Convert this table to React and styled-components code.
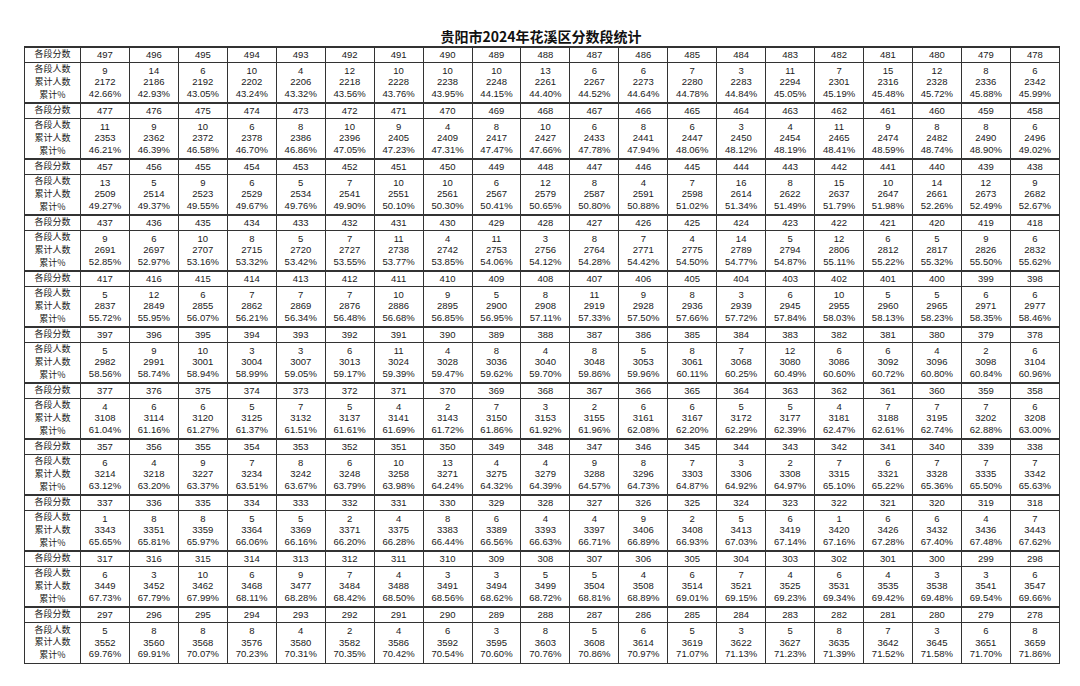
import React from "react";
import styled, { createGlobalStyle } from "styled-components";

const GlobalStyle = createGlobalStyle`
  html, body {
    margin: 0;
    padding: 0;
    background: #ffffff;
  }
  body {
    font-family: "Liberation Sans", Arial, "Noto Sans CJK SC", sans-serif;
    color: #111;
  }
`;

const Page = styled.div`
  width: 1080px;
  height: 686px;
  padding-top: 28px;
  box-sizing: border-box;
  display: flex;
  flex-direction: column;
  align-items: center;
`;

const Title = styled.h1`
  margin: 0 0 1px;
  font-family: "Noto Sans CJK SC", "Noto Sans", sans-serif;
  font-weight: 700;
  font-size: 14px;
  line-height: 17px;
  color: #111;
  padding-left: 2px;
`;

const Table = styled.table`
  width: 1036px;
  margin-left: 4px;
  border-collapse: collapse;
  table-layout: fixed;
  border: 1px solid #222;
`;

const HeadRow = styled.tr`
  height: 15px;
  border-top: 2px solid #333;
`;

const DataRow = styled.tr`
  height: 41px;
`;

const Cell = styled.td`
  border: 1px solid #333;
  padding: 0;
  text-align: center;
  vertical-align: middle;
  font-size: 9.5px;
  line-height: 11.8px;
  color: #1a1a1a;
  white-space: nowrap;
  overflow: hidden;
`;

const LabelCell = styled(Cell)`
  font-family: "Noto Sans CJK SC", sans-serif;
  font-size: 9px;
  line-height: 12.6px;
`;

const Line = styled.div`
  display: block;
`;

const blocks = [
  [
    [9, 14, 6, 10, 4, 12, 10, 10, 10, 13, 6, 6, 7, 3, 11, 7, 15, 12, 8, 6],
    [2172, 2186, 2192, 2202, 2206, 2218, 2228, 2238, 2248, 2261, 2267, 2273, 2280, 2283, 2294, 2301, 2316, 2328, 2336, 2342],
    ["42.66", "42.93", "43.05", "43.24", "43.32", "43.56", "43.76", "43.95", "44.15", "44.40", "44.52", "44.64", "44.78", "44.84", "45.05", "45.19", "45.48", "45.72", "45.88", "45.99"],
  ],
  [
    [11, 9, 10, 6, 8, 10, 9, 4, 8, 10, 6, 8, 6, 3, 4, 11, 9, 8, 8, 6],
    [2353, 2362, 2372, 2378, 2386, 2396, 2405, 2409, 2417, 2427, 2433, 2441, 2447, 2450, 2454, 2465, 2474, 2482, 2490, 2496],
    ["46.21", "46.39", "46.58", "46.70", "46.86", "47.05", "47.23", "47.31", "47.47", "47.66", "47.78", "47.94", "48.06", "48.12", "48.19", "48.41", "48.59", "48.74", "48.90", "49.02"],
  ],
  [
    [13, 5, 9, 6, 5, 7, 10, 10, 6, 12, 8, 4, 7, 16, 8, 15, 10, 14, 12, 9],
    [2509, 2514, 2523, 2529, 2534, 2541, 2551, 2561, 2567, 2579, 2587, 2591, 2598, 2614, 2622, 2637, 2647, 2661, 2673, 2682],
    ["49.27", "49.37", "49.55", "49.67", "49.76", "49.90", "50.10", "50.30", "50.41", "50.65", "50.80", "50.88", "51.02", "51.34", "51.49", "51.79", "51.98", "52.26", "52.49", "52.67"],
  ],
  [
    [9, 6, 10, 8, 5, 7, 11, 4, 11, 3, 8, 7, 4, 14, 5, 12, 6, 5, 9, 6],
    [2691, 2697, 2707, 2715, 2720, 2727, 2738, 2742, 2753, 2756, 2764, 2771, 2775, 2789, 2794, 2806, 2812, 2817, 2826, 2832],
    ["52.85", "52.97", "53.16", "53.32", "53.42", "53.55", "53.77", "53.85", "54.06", "54.12", "54.28", "54.42", "54.50", "54.77", "54.87", "55.11", "55.22", "55.32", "55.50", "55.62"],
  ],
  [
    [5, 12, 6, 7, 7, 7, 10, 9, 5, 8, 11, 9, 8, 3, 6, 10, 5, 5, 6, 6],
    [2837, 2849, 2855, 2862, 2869, 2876, 2886, 2895, 2900, 2908, 2919, 2928, 2936, 2939, 2945, 2955, 2960, 2965, 2971, 2977],
    ["55.72", "55.95", "56.07", "56.21", "56.34", "56.48", "56.68", "56.85", "56.95", "57.11", "57.33", "57.50", "57.66", "57.72", "57.84", "58.03", "58.13", "58.23", "58.35", "58.46"],
  ],
  [
    [5, 9, 10, 3, 3, 6, 11, 4, 8, 4, 8, 5, 8, 7, 12, 6, 6, 4, 2, 6],
    [2982, 2991, 3001, 3004, 3007, 3013, 3024, 3028, 3036, 3040, 3048, 3053, 3061, 3068, 3080, 3086, 3092, 3096, 3098, 3104],
    ["58.56", "58.74", "58.94", "58.99", "59.05", "59.17", "59.39", "59.47", "59.62", "59.70", "59.86", "59.96", "60.11", "60.25", "60.49", "60.60", "60.72", "60.80", "60.84", "60.96"],
  ],
  [
    [4, 6, 6, 5, 7, 5, 4, 2, 7, 3, 2, 6, 6, 5, 5, 4, 7, 7, 7, 6],
    [3108, 3114, 3120, 3125, 3132, 3137, 3141, 3143, 3150, 3153, 3155, 3161, 3167, 3172, 3177, 3181, 3188, 3195, 3202, 3208],
    ["61.04", "61.16", "61.27", "61.37", "61.51", "61.61", "61.69", "61.72", "61.86", "61.92", "61.96", "62.08", "62.20", "62.29", "62.39", "62.47", "62.61", "62.74", "62.88", "63.00"],
  ],
  [
    [6, 4, 9, 7, 8, 6, 10, 13, 4, 4, 9, 8, 7, 3, 2, 7, 6, 7, 7, 7],
    [3214, 3218, 3227, 3234, 3242, 3248, 3258, 3271, 3275, 3279, 3288, 3296, 3303, 3306, 3308, 3315, 3321, 3328, 3335, 3342],
    ["63.12", "63.20", "63.37", "63.51", "63.67", "63.79", "63.98", "64.24", "64.32", "64.39", "64.57", "64.73", "64.87", "64.92", "64.97", "65.10", "65.22", "65.36", "65.50", "65.63"],
  ],
  [
    [1, 8, 8, 5, 5, 2, 4, 8, 6, 4, 4, 9, 2, 5, 6, 1, 6, 6, 4, 7],
    [3343, 3351, 3359, 3364, 3369, 3371, 3375, 3383, 3389, 3393, 3397, 3406, 3408, 3413, 3419, 3420, 3426, 3432, 3436, 3443],
    ["65.65", "65.81", "65.97", "66.06", "66.16", "66.20", "66.28", "66.44", "66.56", "66.63", "66.71", "66.89", "66.93", "67.03", "67.14", "67.16", "67.28", "67.40", "67.48", "67.62"],
  ],
  [
    [6, 3, 10, 6, 9, 7, 4, 3, 3, 5, 5, 4, 6, 7, 4, 6, 4, 3, 3, 6],
    [3449, 3452, 3462, 3468, 3477, 3484, 3488, 3491, 3494, 3499, 3504, 3508, 3514, 3521, 3525, 3531, 3535, 3538, 3541, 3547],
    ["67.73", "67.79", "67.99", "68.11", "68.28", "68.42", "68.50", "68.56", "68.62", "68.72", "68.81", "68.89", "69.01", "69.15", "69.23", "69.34", "69.42", "69.48", "69.54", "69.66"],
  ],
  [
    [5, 8, 8, 8, 4, 2, 4, 6, 3, 8, 5, 6, 5, 3, 5, 8, 7, 3, 6, 8],
    [3552, 3560, 3568, 3576, 3580, 3582, 3586, 3592, 3595, 3603, 3608, 3614, 3619, 3622, 3627, 3635, 3642, 3645, 3651, 3659],
    ["69.76", "69.91", "70.07", "70.23", "70.31", "70.35", "70.42", "70.54", "70.60", "70.76", "70.86", "70.97", "71.07", "71.13", "71.23", "71.39", "71.52", "71.58", "71.70", "71.86"],
  ],
];

function Block({ start, data }) {
  const [counts, cums, pcts] = data;
  return (
    <>
      <HeadRow>
        <LabelCell>各段分数</LabelCell>
        {counts.map((_, i) => (
          <Cell key={i}>{start - i}</Cell>
        ))}
      </HeadRow>
      <DataRow>
        <LabelCell>
          <Line>各段人数</Line>
          <Line>累计人数</Line>
          <Line>累计%</Line>
        </LabelCell>
        {counts.map((c, i) => (
          <Cell key={i}>
            <Line>{c}</Line>
            <Line>{cums[i]}</Line>
            <Line>{pcts[i]}%</Line>
          </Cell>
        ))}
      </DataRow>
    </>
  );
}

export default function App() {
  return (
    <Page>
      <GlobalStyle />
      <Title>贵阳市2024年花溪区分数段统计</Title>
      <Table>
        <colgroup>
          <col style={{ width: 56 }} />
          {Array.from({ length: 20 }).map((_, i) => (
            <col key={i} />
          ))}
        </colgroup>
        <tbody>
          {blocks.map((b, i) => (
            <Block key={i} start={497 - i * 20} data={b} />
          ))}
        </tbody>
      </Table>
    </Page>
  );
}
